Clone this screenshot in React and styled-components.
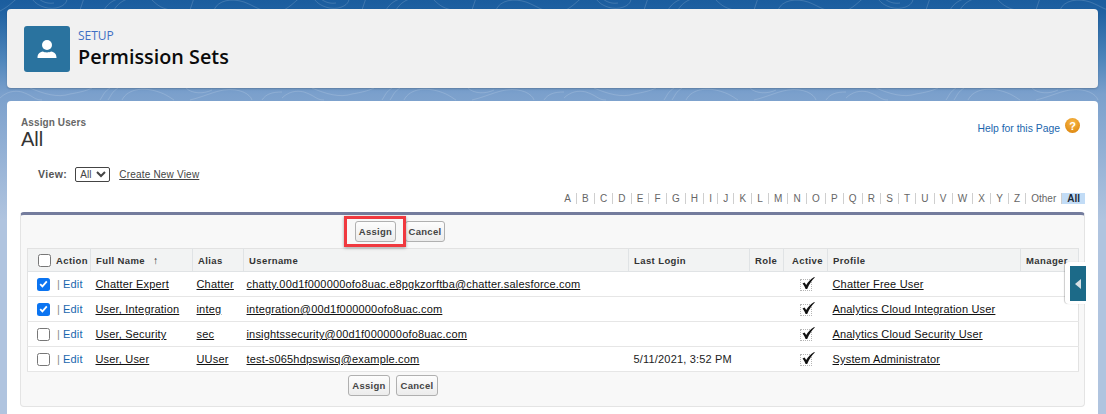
import styled, { createGlobalStyle } from "styled-components";

const GlobalStyle = createGlobalStyle`
  html, body {
    margin: 0;
    padding: 0;
    height: 414px;
    overflow: hidden;
    font-family: "Liberation Sans", Arial, sans-serif;
  }
`;

const Page = styled.div`
  position: relative;
  width: 1106px;
  height: 414px;
  overflow: hidden;
  box-sizing: border-box;
  padding: 9px 8px 0 7px;
  background: linear-gradient(180deg, #1b5d9e 0px, #1f61a2 12px, #4f86bb 60px, #7ba0cc 94px, #b0c4df 220px, #b0c4df 414px);
`;

const Contours = styled.svg`
  position: absolute;
  left: 0;
  top: 0;
  width: 1106px;
  height: 414px;
  pointer-events: none;
`;

const HeaderCard = styled.header`
  position: relative;
  display: flex;
  align-items: center;
  gap: 8px;
  height: 79px;
  box-sizing: border-box;
  padding: 0 17px;
  background: #f1f1f1;
  border-radius: 4px;
  box-shadow: 0 1px 2px rgba(0, 0, 0, 0.2);
`;

const IconTile = styled.div`
  display: flex;
  align-items: center;
  justify-content: center;
  width: 46px;
  height: 46px;
  border-radius: 3px;
  background: #2a739f;
`;

const HeaderText = styled.div`
  display: flex;
  flex-direction: column;
`;

const Eyebrow = styled.div`
  font-family: "Open Sans", sans-serif;
  font-size: 12px;
  line-height: 16px;
  color: #3f6fc4;
`;

const Title = styled.h1`
  margin: 0;
  font-family: "Open Sans", sans-serif;
  font-size: 19.8px;
  line-height: 26px;
  font-weight: 600;
  color: #0b0b0b;
`;

const Panel = styled.main`
  position: relative;
  height: 320px;
  margin-top: 13px;
  box-sizing: border-box;
  padding: 16px 13px 0 13px;
  background: #fff;
  border-radius: 4px 4px 0 0;
`;

const TitleRow = styled.div`
  display: flex;
  justify-content: space-between;
  align-items: flex-start;
`;

const TitleBlock = styled.div`
  padding-left: 1px;
`;

const Subtitle = styled.div`
  font-size: 10px;
  line-height: 12px;
  font-weight: 700;
  letter-spacing: 0.1px;
  color: #666;
`;

const BigAll = styled.div`
  font-size: 20px;
  line-height: 20px;
  color: #333;
`;

const Help = styled.a`
  display: flex;
  align-items: flex-start;
  gap: 5px;
  padding-right: 5px;
  font-size: 10.4px;
  line-height: 18px;
  color: #1a66ae;
`;

const HelpText = styled.span`
  margin-top: 3px;
`;

const HelpDot = styled.span`
  display: flex;
  align-items: center;
  justify-content: center;
  width: 15px;
  height: 15px;
  margin-top: 1px;
  border-radius: 50%;
  font-size: 11px;
  font-weight: 700;
  color: #fff;
  background: radial-gradient(circle at 50% 30%, #f8b848, #d97f06);
`;

const ViewRow = styled.div`
  display: flex;
  align-items: center;
  height: 16px;
  margin: 17px 0 0 18px;
`;

const ViewLabel = styled.span`
  margin-right: 8px;
  font-size: 10.5px;
  font-weight: 700;
  letter-spacing: 0.4px;
  color: #555;
`;

const ViewSelect = styled.select`
  width: 35px;
  height: 15px;
  margin-right: 9px;
  padding: 0;
  font-family: "Liberation Sans", sans-serif;
  font-size: 10px;
  color: #444;
  background: #fff;
  border: 1px solid #444;
  border-radius: 2px;
`;

const PlainLink = styled.a`
  font-size: 10px;
  letter-spacing: 0.2px;
  color: #444;
  text-decoration: underline;
`;

const Alphabet = styled.div`
  display: flex;
  justify-content: flex-end;
  align-items: center;
  height: 12px;
  margin-top: 10px;
`;

const Letter = styled.span`
  padding: 0 ${(p) => (p.$wide ? "5px" : "5.1px")};
  font-size: 10px;
  line-height: 11px;
  font-weight: ${(p) => (p.$active ? 700 : 400)};
  color: ${(p) => (p.$active ? "#1b2a3a" : "#666")};
  background: ${(p) => (p.$active ? "#c2dcf6" : "transparent")};
  border-left: ${(p) => (p.$first ? "0" : "1px solid #cfcfcf")};
`;

const Block = styled.section`
  height: 195px;
  margin-top: 8px;
  box-sizing: border-box;
  padding: 6px 6px 0 6px;
  background: #f8f8f8;
  border: 1px solid #e4e4e4;
  border-top: 3px solid #747c9d;
  border-radius: 4px;
`;

const ButtonRow = styled.div`
  display: flex;
  gap: ${(p) => (p.$bottom ? "6px" : "9px")};
  padding-left: ${(p) => (p.$bottom ? "321px" : "328px")};
  margin-top: ${(p) => (p.$bottom ? "3px" : "0")};
`;

const Button = styled.button`
  width: ${(p) => p.$w}px;
  height: 21px;
  padding: 0;
  font-family: "Liberation Sans", sans-serif;
  font-size: 9.5px;
  font-weight: 700;
  letter-spacing: 0.3px;
  color: #444;
  background: linear-gradient(#fdfdfd, #ececec);
  border: 1px solid #b0b0b0;
  border-radius: 3px;
`;

const Table = styled.table`
  width: 1051px;
  margin-top: 6px;
  table-layout: fixed;
  border-collapse: collapse;
  background: #fff;
  border: 1px solid #e2e2e2;
`;

const Th = styled.th`
  height: 23px;
  padding: 0 0 0 ${(p) => p.$pad ?? 5}px;
  box-sizing: border-box;
  text-align: left;
  font-size: 9.5px;
  font-weight: 700;
  letter-spacing: 0.4px;
  white-space: nowrap;
  color: #333;
  background: #f2f3f3;
  border-right: 1px solid #e0e3e5;
  border-bottom: 1px solid #e0e3e5;
`;

const SortArrow = styled.span`
  margin-left: 8px;
  font-size: 10.5px;
  font-weight: 400;
`;

const Td = styled.td`
  height: 25px;
  padding: 0 0 0 ${(p) => p.$pad ?? 4}px;
  box-sizing: border-box;
  font-size: 11px;
  letter-spacing: 0.18px;
  white-space: nowrap;
  color: #222;
  border-bottom: 1px solid #e6e6e6;
`;

const CellLink = styled.a`
  color: #111;
  text-decoration: underline;
`;

const ActionCell = styled.div`
  display: flex;
  align-items: center;
  gap: ${(p) => (p.$head ? "5px" : "7px")};
  padding-left: 5px;
`;

const Box = styled.span`
  display: inline-flex;
  align-items: center;
  justify-content: center;
  flex: none;
  width: 13px;
  height: 13px;
  box-sizing: border-box;
  border-radius: 2.5px;
  background: ${(p) => (p.$on ? "#0b74f1" : "#fff")};
  border: ${(p) => (p.$on ? "0" : "1px solid #777")};
`;

const EditLink = styled.a`
  font-weight: 400;
  color: #8b8b8b;
  span {
    color: #1a66ae;
    margin-left: 3px;
  }
`;

const ActiveMark = styled.div`
  display: flex;
  padding-left: 16px;
`;

const MarkBox = styled.span`
  display: inline-flex;
  width: 12px;
  height: 12px;
  box-sizing: border-box;
  margin-top: 2px;
  border: 1px dotted #b5b5b5;
`;

const Highlight = styled.div`
  position: absolute;
  left: 344px;
  top: 216px;
  width: 62px;
  height: 31px;
  box-sizing: border-box;
  border: 3px solid #f0393f;
  box-shadow: 0 1px 3px rgba(0, 0, 0, 0.35);
`;

const SideTab = styled.div`
  position: absolute;
  left: 1065px;
  top: 262px;
  width: 21px;
  height: 42px;
  box-sizing: border-box;
  padding: 4px 0 3px 5px;
  background: #fff;
  border-radius: 4px 0 0 4px;
  box-shadow: -1px 0 1px rgba(0, 0, 0, 0.2);
`;

const SideTabInner = styled.div`
  display: flex;
  align-items: center;
  justify-content: center;
  height: 100%;
  background: #1c6a88;
`;

const Arrow = styled.span`
  width: 0;
  height: 0;
  border-top: 5.5px solid transparent;
  border-bottom: 5.5px solid transparent;
  border-right: 6px solid #d6dfe4;
`;

const letters = "ABCDEFGHIJKLMNOPQRSTUVWXYZ".split("");

const columns = [63, 102, 51, 385, 121, 34, 44, 193, 58];

const rows = [
  { on: true, name: "Chatter Expert", alias: "Chatter", user: "chatty.00d1f000000ofo8uac.e8pgkzorftba@chatter.salesforce.com", login: "", profile: "Chatter Free User" },
  { on: true, name: "User, Integration", alias: "integ", user: "integration@00d1f000000ofo8uac.com", login: "", profile: "Analytics Cloud Integration User" },
  { on: false, name: "User, Security", alias: "sec", user: "insightssecurity@00d1f000000ofo8uac.com", login: "", profile: "Analytics Cloud Security User" },
  { on: false, name: "User, User", alias: "UUser", user: "test-s065hdpswisq@example.com", login: "5/11/2021, 3:52 PM", profile: "System Administrator" },
];

function Check() {
  return (
    <svg width="9" height="8" viewBox="0 0 9 8">
      <path d="M1.2 4.2 L3.4 6.4 L7.8 1.4" fill="none" stroke="#fff" strokeWidth="1.8" />
    </svg>
  );
}

function ActiveCheck() {
  return (
    <ActiveMark>
      <MarkBox>
        <svg width="13" height="12" viewBox="0 0 13 12" style={{ margin: "-3px 0 0 1px", flex: "none", overflow: "visible" }}>
          <path d="M0.5 6.5 L2.6 5.4 L4.2 8 C6 5 8.4 2.2 12.2 0 L12.8 0.6 C9.8 3.4 7.2 7 5.2 12 L3.6 12 C2.9 10 1.8 8 0.5 6.5 Z" fill="#111" />
        </svg>
      </MarkBox>
    </ActiveMark>
  );
}

export default function App() {
  return (
    <Page>
      <GlobalStyle />
      <Contours viewBox="0 0 1106 414" fill="none">
        <defs>
          <pattern id="topo" width="282" height="110" patternUnits="userSpaceOnUse">
            <g stroke="#ffffff" strokeOpacity="0.15">
              <path d="M0 11 C10 6 14 0 18 -2" />
              <path d="M32 -2 C34 4 46 10 56 8 C66 6 68 0 66 -2" />
              <path d="M38 -2 C42 2 48 4 54 3" />
              <path d="M84 -2 L80 10" />
              <path d="M104 10 C108 3 114 0 120 -2" />
              <path d="M114 10 C118 3 124 0 130 -2" />
              <path d="M150 -2 C156 4 160 8 170 10" />
              <path d="M190 10 L194 -2" />
              <path d="M214 10 C218 0 232 -2 244 2 C252 5 256 8 262 10" />
              <path d="M0 98 C6 92 14 90 22 92 C34 96 34 100 42 100" />
              <path d="M30 88 C44 94 58 98 70 94 C82 92 88 90 92 88" />
              <path d="M100 100 C104 94 104 92 110 88" />
              <path d="M108 100 C112 94 112 92 118 88" />
              <path d="M122 100 C128 88 146 86 164 94 C170 97 172 99 174 100" />
              <path d="M186 88 C192 94 204 94 212 90" />
              <path d="M190 100 C206 96 212 92 224 90 C240 88 250 94 252 100" />
              <path d="M262 100 C266 94 272 92 282 92" />
            </g>
          </pattern>
        </defs>
        <rect x="0" y="0" width="1106" height="110" fill="url(#topo)" />
      </Contours>

      <HeaderCard>
        <IconTile>
          <svg width="20" height="20" viewBox="0 0 20 20">
            <circle cx="10" cy="6" r="5" fill="#fff" />
            <path d="M0.5 19 C0.5 15 2.5 13 6 12.5 C8 13.7 12 13.7 14 12.5 C17.5 13 19.5 15 19.5 19 Z" fill="#fff" />
          </svg>
        </IconTile>
        <HeaderText>
          <Eyebrow>SETUP</Eyebrow>
          <Title>Permission Sets</Title>
        </HeaderText>
      </HeaderCard>

      <Panel>
        <TitleRow>
          <TitleBlock>
            <Subtitle>Assign Users</Subtitle>
            <BigAll>All</BigAll>
          </TitleBlock>
          <Help>
            <HelpText>Help for this Page</HelpText>
            <HelpDot>?</HelpDot>
          </Help>
        </TitleRow>

        <ViewRow>
          <ViewLabel>View:</ViewLabel>
          <ViewSelect defaultValue="All">
            <option>All</option>
          </ViewSelect>
          <PlainLink>Create New View</PlainLink>
        </ViewRow>

        <Alphabet>
          {letters.map((l, i) => (
            <Letter key={l} $first={i === 0}>{l}</Letter>
          ))}
          <Letter $wide>Other</Letter>
          <Letter $wide $active>All</Letter>
        </Alphabet>

        <Block>
          <ButtonRow>
            <Button $w={41}>Assign</Button>
            <Button $w={40}>Cancel</Button>
          </ButtonRow>
          <Table>
            <colgroup>
              {columns.map((w, i) => (
                <col key={i} width={w} />
              ))}
            </colgroup>
            <thead>
              <tr>
                <Th>
                  <ActionCell $head>
                    <Box />
                    Action
                  </ActionCell>
                </Th>
                <Th>Full Name<SortArrow>↑</SortArrow></Th>
                <Th>Alias</Th>
                <Th>Username</Th>
                <Th>Last Login</Th>
                <Th>Role</Th>
                <Th $pad={8}>Active</Th>
                <Th>Profile</Th>
                <Th>Manager</Th>
              </tr>
            </thead>
            <tbody>
              {rows.map((r) => (
                <tr key={r.name}>
                  <Td $pad={4}>
                    <ActionCell>
                      <Box $on={r.on}>{r.on && <Check />}</Box>
                      <EditLink>|<span>Edit</span></EditLink>
                    </ActionCell>
                  </Td>
                  <Td $pad={5}><CellLink>{r.name}</CellLink></Td>
                  <Td><CellLink>{r.alias}</CellLink></Td>
                  <Td $pad={3}><CellLink>{r.user}</CellLink></Td>
                  <Td $pad={5}>{r.login}</Td>
                  <Td />
                  <Td $pad={0}><ActiveCheck /></Td>
                  <Td $pad={5}><CellLink>{r.profile}</CellLink></Td>
                  <Td />
                </tr>
              ))}
            </tbody>
          </Table>
          <ButtonRow $bottom>
            <Button $w={42}>Assign</Button>
            <Button $w={42}>Cancel</Button>
          </ButtonRow>
        </Block>
      </Panel>

      <Highlight />
      <SideTab>
        <SideTabInner>
          <Arrow />
        </SideTabInner>
      </SideTab>
    </Page>
  );
}
